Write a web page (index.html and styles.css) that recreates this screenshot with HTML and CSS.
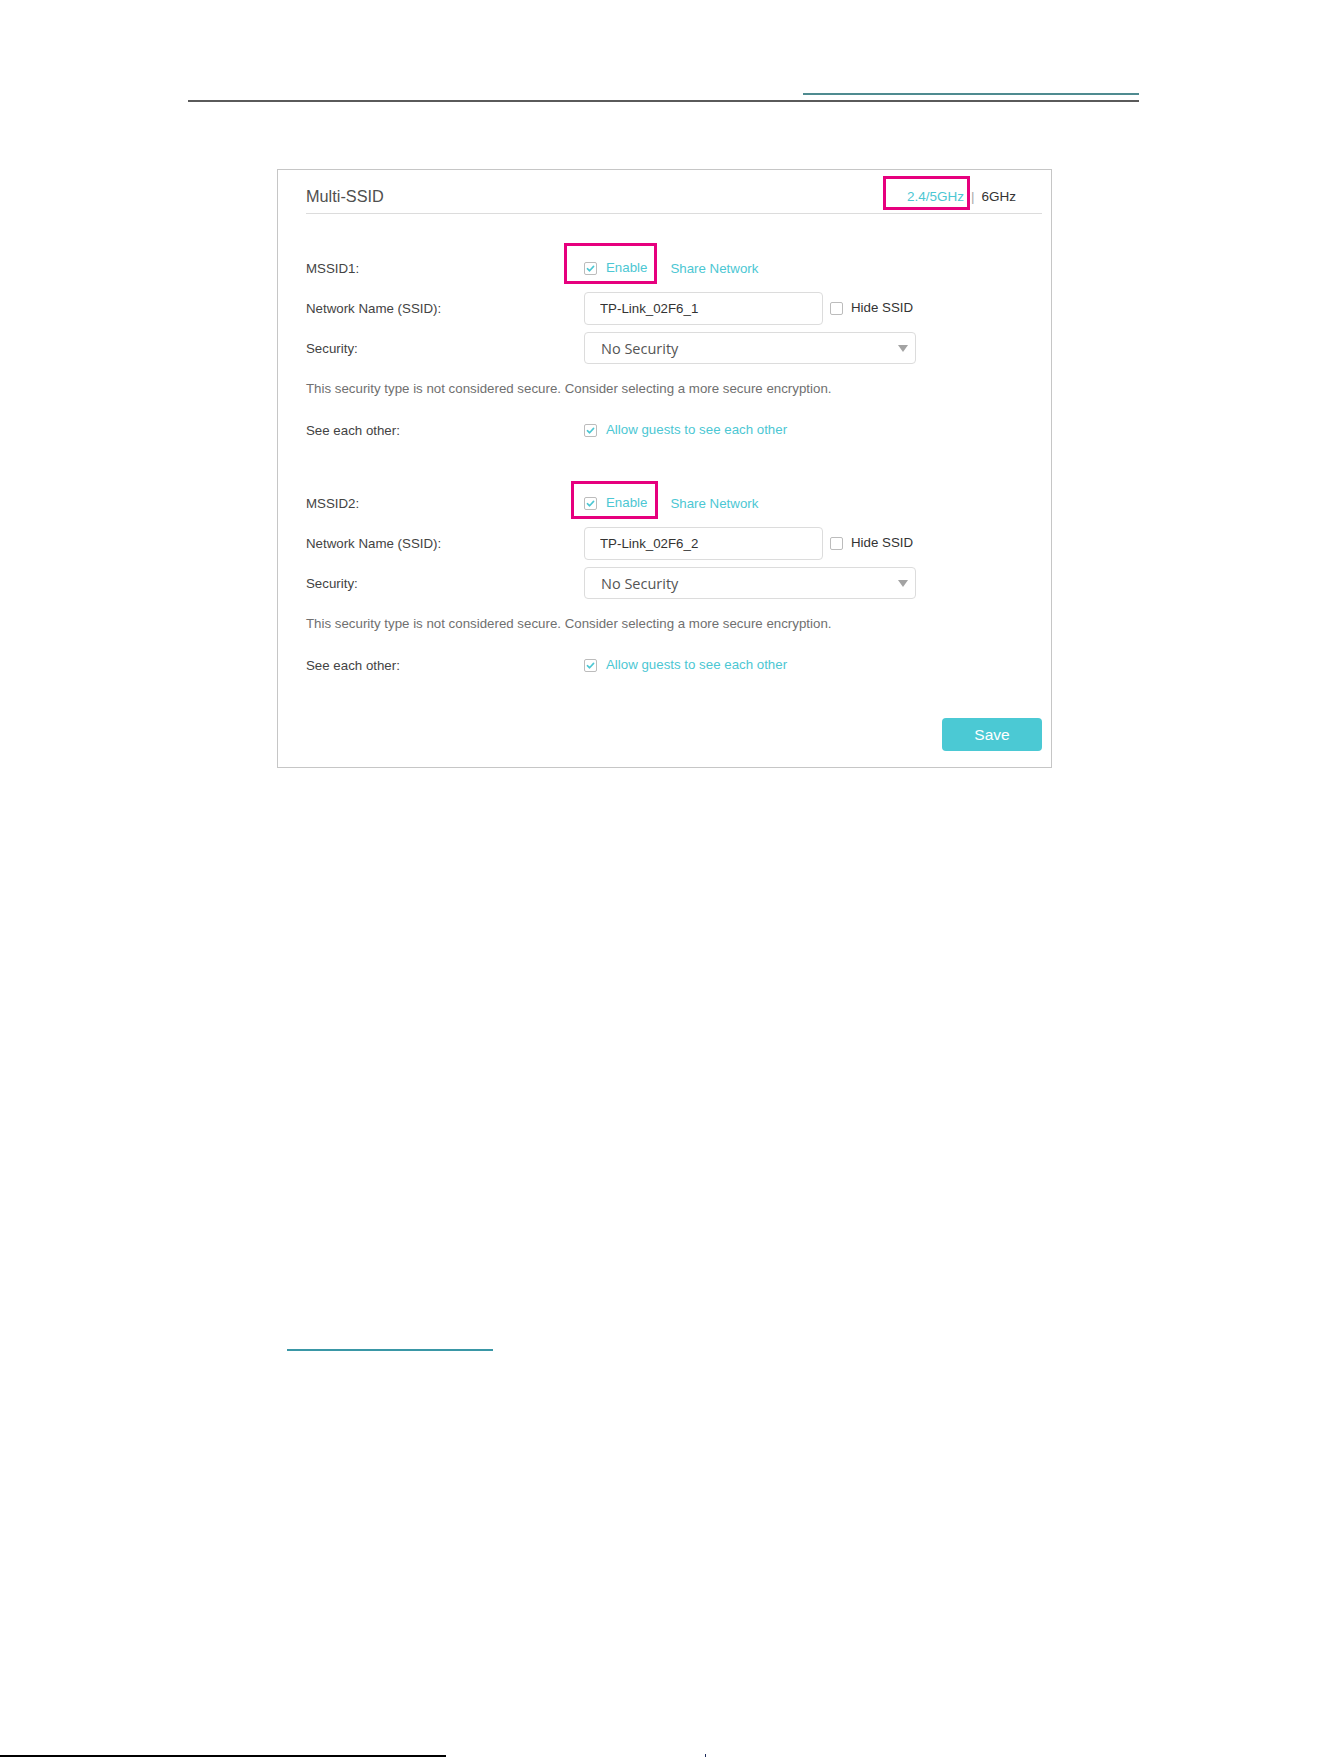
FILE: index.html
```html
<!DOCTYPE html>
<html lang="en">
<head>
    <meta charset="UTF-8">
    <meta name="viewport" content="width=device-width, initial-scale=1.0">
    <title>Multi-SSID</title>
    <link rel="stylesheet" href="styles.css">
</head>
<body>
    <div class="page">
        <div class="doc-head">
            <div class="accent"></div>
            <div class="rule"></div>
        </div>

        <section class="panel">
            <div class="panel-head">
                <h2 class="panel-title">Multi-SSID</h2>
                <div class="bands">
                    <a class="band active">2.4/5GHz<span class="mark mark-band"></span></a>
                    <span class="sep">|</span>
                    <a class="band">6GHz</a>
                </div>
            </div>

            <div class="form">
                <div class="group">
                    <div class="row">
                        <span class="label">MSSID1:</span>
                        <label class="opt">
                            <span class="check on"><svg viewBox="0 0 13 13" width="13" height="13"><path d="M3.4 6.7 L5.6 8.8 L9.6 4.4"/></svg></span>
                            Enable
                            <span class="mark mark-enable1"></span>
                        </label>
                        <a class="link share">Share Network</a>
                    </div>
                    <div class="row">
                        <span class="label">Network Name (SSID):</span>
                        <input class="field" type="text" value="TP-Link_02F6_1">
                        <label class="opt plain hide">
                            <span class="check"></span>
                            Hide SSID
                        </label>
                    </div>
                    <div class="row">
                        <span class="label">Security:</span>
                        <div class="select">
                            <span>No Security</span>
                            <svg viewBox="0 0 10 7" width="10" height="7"><path d="M0 0 H10 L5 7 Z"/></svg>
                        </div>
                    </div>
                    <div class="row">
                        <p class="warn">This security type is not considered secure. Consider selecting a more secure encryption.</p>
                    </div>
                    <div class="row spaced">
                        <span class="label">See each other:</span>
                        <label class="opt">
                            <span class="check on"><svg viewBox="0 0 13 13" width="13" height="13"><path d="M3.4 6.7 L5.6 8.8 L9.6 4.4"/></svg></span>
                            Allow guests to see each other
                        </label>
                    </div>
                </div>

                <div class="group">
                    <div class="row">
                        <span class="label">MSSID2:</span>
                        <label class="opt">
                            <span class="check on"><svg viewBox="0 0 13 13" width="13" height="13"><path d="M3.4 6.7 L5.6 8.8 L9.6 4.4"/></svg></span>
                            Enable
                            <span class="mark mark-enable2"></span>
                        </label>
                        <a class="link share">Share Network</a>
                    </div>
                    <div class="row">
                        <span class="label">Network Name (SSID):</span>
                        <input class="field" type="text" value="TP-Link_02F6_2">
                        <label class="opt plain hide">
                            <span class="check"></span>
                            Hide SSID
                        </label>
                    </div>
                    <div class="row">
                        <span class="label">Security:</span>
                        <div class="select">
                            <span>No Security</span>
                            <svg viewBox="0 0 10 7" width="10" height="7"><path d="M0 0 H10 L5 7 Z"/></svg>
                        </div>
                    </div>
                    <div class="row">
                        <p class="warn">This security type is not considered secure. Consider selecting a more secure encryption.</p>
                    </div>
                    <div class="row spaced">
                        <span class="label">See each other:</span>
                        <label class="opt">
                            <span class="check on"><svg viewBox="0 0 13 13" width="13" height="13"><path d="M3.4 6.7 L5.6 8.8 L9.6 4.4"/></svg></span>
                            Allow guests to see each other
                        </label>
                    </div>
                </div>
            </div>

            <div class="panel-foot">
                <button class="btn-save" type="button">Save</button>
            </div>
        </section>

        <div class="note-link"></div>

        <div class="doc-foot">
            <div class="foot-rule"></div>
            <div class="foot-tick"></div>
        </div>
    </div>
</body>
</html>
```

FILE: styles.css
```css
:root {
    --teal: #4cc7d3;
    --pink: #e6007e;
    --label: #434343;
    --line: #dcdcdc;
}

* {
    margin: 0;
    padding: 0;
    box-sizing: border-box;
}

body {
    font-family: "Liberation Sans", Arial, sans-serif;
    background: #fff;
    color: var(--label);
}

.page {
    display: flex;
    flex-direction: column;
}

/* document header rules */
.doc-head {
    margin: 93px 0 0 188px;
    width: 951px;
}

.doc-head .accent {
    height: 2px;
    width: 336px;
    margin-left: auto;
    background: #4f8b90;
}

.doc-head .rule {
    height: 2px;
    margin-top: 5px;
    background: #5a5a5a;
}

/* settings panel */
.panel {
    margin: 67px 0 0 277px;
    width: 775px;
    height: 599px;
    border: 1px solid #c6c6c6;
    padding: 0 9px 0 28px;
    display: flex;
    flex-direction: column;
}

.panel-head {
    height: 44px;
    padding-top: 10px;
    border-bottom: 1px solid var(--line);
    display: flex;
    justify-content: space-between;
    align-items: center;
}

.panel-title {
    font-size: 16.3px;
    font-weight: normal;
    color: #505050;
}

.bands {
    display: flex;
    align-items: center;
    padding-right: 26px;
    font-size: 13.5px;
    line-height: 16px;
}

.band {
    position: relative;
    color: #333;
}

.band.active {
    color: var(--teal);
}

.sep {
    margin: 0 7px 0 7px;
    color: #aaa;
}

/* pink callout frames */
.mark {
    position: absolute;
    border: 3px solid var(--pink);
    pointer-events: none;
}

.mark-band {
    left: -24px;
    right: -6px;
    top: -13px;
    bottom: -5px;
}

.mark-enable1 {
    left: -20px;
    right: -10px;
    top: -17px;
    bottom: -8px;
}

.mark-enable2 {
    left: -13px;
    right: -11px;
    top: -14px;
    bottom: -8px;
}

/* form rows */
.form {
    margin-top: 34px;
}

.group + .group {
    margin-top: 33px;
}

.row {
    display: flex;
    align-items: center;
    height: 40px;
    font-size: 13.3px;
}

.row.spaced {
    margin-top: 2px;
}

.label {
    width: 278px;
    color: var(--label);
}

.warn {
    color: #707070;
}

.opt {
    position: relative;
    display: inline-flex;
    align-items: center;
    gap: 9px;
    line-height: 16px;
    color: var(--teal);
}

.opt.plain {
    color: #333;
    gap: 8px;
}

.opt.hide {
    margin-left: 7px;
}

.check {
    width: 13px;
    height: 13px;
    border: 1px solid #bcbcbc;
    border-radius: 2px;
    background: #fff;
    display: inline-flex;
}

.check svg {
    margin: -1px;
    fill: none;
    stroke: var(--teal);
    stroke-width: 1.6;
    stroke-linecap: round;
    stroke-linejoin: round;
}

.link {
    color: var(--teal);
}

.share {
    margin-left: 23px;
}

.field {
    width: 239px;
    height: 33px;
    border: 1px solid var(--line);
    border-radius: 4px;
    padding: 0 15px;
    font-family: "Liberation Sans", Arial, sans-serif;
    font-size: 13.3px;
    color: #333;
    outline: none;
}

.select {
    width: 332px;
    height: 32px;
    border: 1px solid var(--line);
    border-radius: 4px;
    padding: 0 7px 0 16px;
    display: flex;
    align-items: center;
    justify-content: space-between;
    font-family: "Open Sans", sans-serif;
    font-size: 14.5px;
    color: #555;
}

.select svg {
    fill: #a3a3a3;
}

.panel-foot {
    display: flex;
    justify-content: flex-end;
    margin-top: 33px;
}

.btn-save {
    width: 100px;
    height: 33px;
    border: none;
    border-radius: 4px;
    background: #4bc9d4;
    color: #fff;
    font-family: "Liberation Sans", Arial, sans-serif;
    font-size: 15.5px;
    cursor: pointer;
}

/* lower page marks */
.note-link {
    margin: 581px 0 0 287px;
    width: 206px;
    border-bottom: 2px solid #3a97a6;
}

.doc-foot {
    margin-top: 403px;
    display: flex;
    align-items: flex-end;
}

.foot-rule {
    width: 446px;
    height: 2px;
    background: #000;
}

.foot-tick {
    margin-left: 259px;
    width: 1px;
    height: 3px;
    background: #1c2a5a;
}
```
